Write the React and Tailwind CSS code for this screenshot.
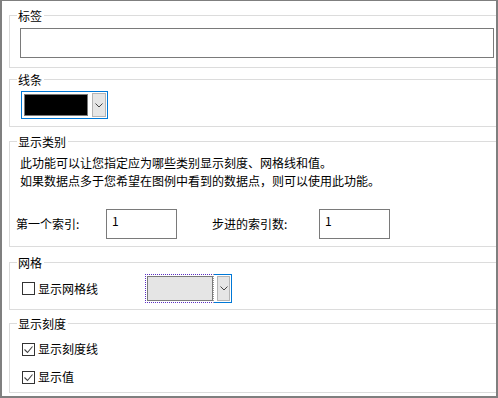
import React from 'react'

// Chart axis options panel (WinForms-style property page)

function Group({ title, h, className = '', children }) {
  return (
    <fieldset className={`w-[520px] border border-[#dcdcdc] ${h} ${className}`}>
      <legend className="ml-[7px] pl-px pr-[2px] leading-[15px]">{title}</legend>
      {children}
    </fieldset>
  )
}

function Chevron() {
  return (
    <svg width="8" height="5" viewBox="0 0 8 5" className="block">
      <path d="M0.5 0.5 L4 4 L7.5 0.5" fill="none" stroke="#444" strokeWidth="1" />
    </svg>
  )
}

function CheckBox({ checked }) {
  return (
    <div className="w-[13px] h-[13px] border border-[#333] bg-white flex items-center justify-center shrink-0">
      {checked && (
        <svg width="11" height="11" viewBox="0 0 11 11" className="block">
          <path d="M1.5 5.5 L4.5 8.5 L9.5 2.5" fill="none" stroke="#444" strokeWidth="1.1" />
        </svg>
      )}
    </div>
  )
}

function NumberBox({ value, className = '' }) {
  return (
    <div className={`h-[30px] border border-[#7a7a7a] bg-white pl-[5px] pt-[2px] leading-[17px] ${className}`}>
      {value}
    </div>
  )
}

export default function App() {
  return (
    <div className="w-[498px] h-[398px] overflow-hidden bg-white border-[#7f7f7f] border-t border-l-2 border-r-2 border-b-2 text-[12px] text-black font-['Noto_Sans_CJK_SC','Noto_Sans',sans-serif]">
      <div className="pl-[7px] pt-[7px] flex flex-col">
        <Group title="标签" h="h-[60px]">
          <div className="ml-[10px] mt-[5px] w-[474px] h-[30px] border border-[#7a7a7a] bg-white" />
        </Group>

        <Group title="线条" h="h-[55px]" className="mt-[4px]">
          <div className="ml-[11px] mt-[4px] w-[87px] h-[28px] border border-[#0078d7] p-px flex">
            <div className="ml-px my-px w-[66px] border border-[#7a7a7a] bg-black" />
            <div className="ml-[4px] w-[14px] bg-[#e5e5e5] border border-[#b4b4b4] flex items-center justify-center">
              <Chevron />
            </div>
          </div>
        </Group>

        <Group title="显示类别" h="h-[113px]" className="mt-[7px]">
          <div className="ml-[10px] mt-[5px] leading-[18px]">
            <div>此功能可以让您指定应为哪些类别显示刻度、网格线和值。</div>
            <div>如果数据点多于您希望在图例中看到的数据点，则可以使用此功能。</div>
          </div>
          <div className="mt-[19px] ml-[6px] flex items-center">
            <div className="w-[90px]">第一个索引:</div>
            <NumberBox value="1" className="w-[71px]" />
            <div className="ml-[35px] w-[107px]">步进的索引数:</div>
            <NumberBox value="1" className="w-[71px]" />
          </div>
        </Group>

        <Group title="网格" h="h-[55px]" className="mt-[8px]">
          <div className="mt-[4px] ml-[12px] h-[29px] flex items-center">
            <CheckBox />
            <div className="ml-[3px] w-[60px]">显示网格线</div>
            <div className="ml-[47px] h-[29px] flex">
              <div className="border border-dotted border-[#5b2fc2] border-r-[#9a9a9a] pl-px py-px">
                <div className="w-[66px] h-full bg-[#e5e5e5] border border-[#7a7a7a]" />
              </div>
              <div className="border-y border-r border-[#0078d7] pl-[3px] pr-px py-px">
                <div className="w-[13px] h-full bg-[#e5e5e5] border border-[#b4b4b4] flex items-center justify-center">
                  <Chevron />
                </div>
              </div>
            </div>
          </div>
        </Group>

        <Group title="显示刻度" h="h-[77px]" className="mt-[6px]">
          <div className="mt-[8px] ml-[12px] flex flex-col gap-[8px]">
            <div className="h-[20px] flex items-center">
              <CheckBox checked />
              <div className="ml-[3px]">显示刻度线</div>
            </div>
            <div className="h-[20px] flex items-center">
              <CheckBox checked />
              <div className="ml-[3px]">显示值</div>
            </div>
          </div>
        </Group>
      </div>
    </div>
  )
}
